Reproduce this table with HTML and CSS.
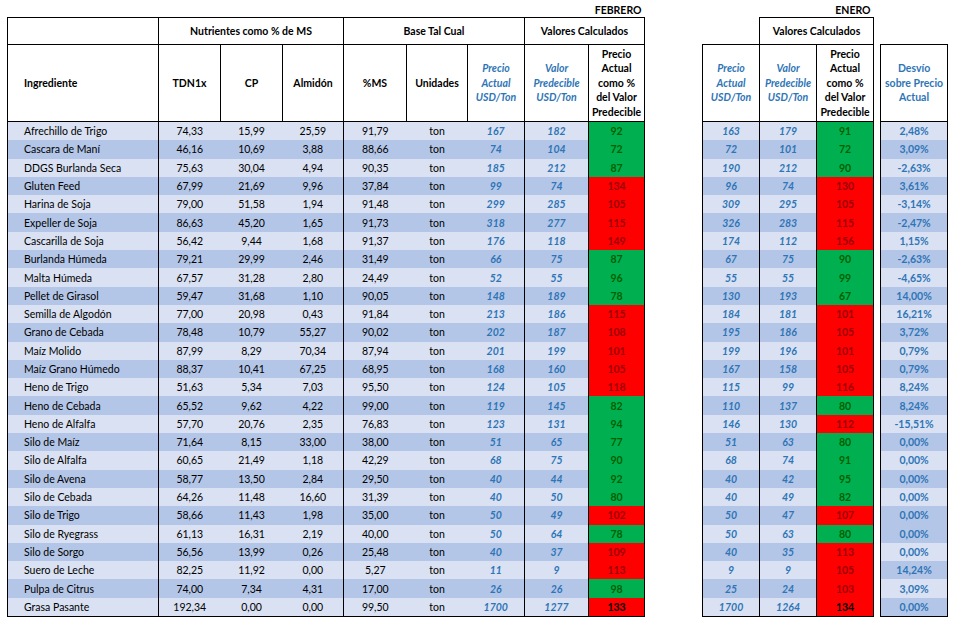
FILE: index.html
```html
<!DOCTYPE html>
<html lang="es">
<head>
<meta charset="utf-8">
<title>Valores predecibles de ingredientes</title>
<link rel="stylesheet" href="styles.css">
</head>
<body>
<div class="sheet">
  <table class="tbl tbl-feb">
    <colgroup>
      <col class="w-ing"><col class="w62"><col class="w62"><col class="w61"><col class="w63"><col class="w61"><col class="w57"><col class="w64"><col class="w56">
    </colgroup>
    <thead>
      <tr class="r-label"><td colspan="9" class="month">FEBRERO</td></tr>
      <tr class="r-h1">
        <th class="hb"></th>
        <th class="hb" colspan="3">Nutrientes como % de MS</th>
        <th class="hb" colspan="3">Base Tal Cual</th>
        <th class="hb" colspan="2">Valores Calculados</th>
      </tr>
      <tr class="r-h2">
        <th class="hb ing">Ingrediente</th>
        <th class="hb">TDN1x</th>
        <th class="hb">CP</th>
        <th class="hb">Almidón</th>
        <th class="hb">%MS</th>
        <th class="hb">Unidades</th>
        <th class="hb blue-i">Precio<br>Actual<br>USD/Ton</th>
        <th class="hb blue-i">Valor<br>Predecible<br>USD/Ton</th>
        <th class="hb">Precio<br>Actual<br>como %<br>del Valor<br>Predecible</th>
      </tr>
    </thead>
    <tbody>
      <tr><td class="ing sl">Afrechillo de Trigo</td><td class="sl">74,33</td><td>15,99</td><td>25,59</td><td class="sl">91,79</td><td>ton</td><td class="bi">167</td><td class="bi sl">182</td><td class="g sl sr">92</td></tr>
      <tr><td class="ing sl">Cascara de Maní</td><td class="sl">46,16</td><td>10,69</td><td>3,88</td><td class="sl">88,66</td><td>ton</td><td class="bi">74</td><td class="bi sl">104</td><td class="g sl sr">72</td></tr>
      <tr><td class="ing sl">DDGS Burlanda Seca</td><td class="sl">75,63</td><td>30,04</td><td>4,94</td><td class="sl">90,35</td><td>ton</td><td class="bi">185</td><td class="bi sl">212</td><td class="g sl sr">87</td></tr>
      <tr><td class="ing sl">Gluten Feed</td><td class="sl">67,99</td><td>21,69</td><td>9,96</td><td class="sl">37,84</td><td>ton</td><td class="bi">99</td><td class="bi sl">74</td><td class="r sl sr">134</td></tr>
      <tr><td class="ing sl">Harina de Soja</td><td class="sl">79,00</td><td>51,58</td><td>1,94</td><td class="sl">91,48</td><td>ton</td><td class="bi">299</td><td class="bi sl">285</td><td class="r sl sr">105</td></tr>
      <tr><td class="ing sl">Expeller de Soja</td><td class="sl">86,63</td><td>45,20</td><td>1,65</td><td class="sl">91,73</td><td>ton</td><td class="bi">318</td><td class="bi sl">277</td><td class="r sl sr">115</td></tr>
      <tr><td class="ing sl">Cascarilla de Soja</td><td class="sl">56,42</td><td>9,44</td><td>1,68</td><td class="sl">91,37</td><td>ton</td><td class="bi">176</td><td class="bi sl">118</td><td class="r sl sr">149</td></tr>
      <tr><td class="ing sl">Burlanda Húmeda</td><td class="sl">79,21</td><td>29,99</td><td>2,46</td><td class="sl">31,49</td><td>ton</td><td class="bi">66</td><td class="bi sl">75</td><td class="g sl sr">87</td></tr>
      <tr><td class="ing sl">Malta Húmeda</td><td class="sl">67,57</td><td>31,28</td><td>2,80</td><td class="sl">24,49</td><td>ton</td><td class="bi">52</td><td class="bi sl">55</td><td class="g sl sr">96</td></tr>
      <tr><td class="ing sl">Pellet de Girasol</td><td class="sl">59,47</td><td>31,68</td><td>1,10</td><td class="sl">90,05</td><td>ton</td><td class="bi">148</td><td class="bi sl">189</td><td class="g sl sr">78</td></tr>
      <tr><td class="ing sl">Semilla de Algodón</td><td class="sl">77,00</td><td>20,98</td><td>0,43</td><td class="sl">91,84</td><td>ton</td><td class="bi">213</td><td class="bi sl">186</td><td class="r sl sr">115</td></tr>
      <tr><td class="ing sl">Grano de Cebada</td><td class="sl">78,48</td><td>10,79</td><td>55,27</td><td class="sl">90,02</td><td>ton</td><td class="bi">202</td><td class="bi sl">187</td><td class="r sl sr">108</td></tr>
      <tr><td class="ing sl">Maíz Molido</td><td class="sl">87,99</td><td>8,29</td><td>70,34</td><td class="sl">87,94</td><td>ton</td><td class="bi">201</td><td class="bi sl">199</td><td class="r sl sr">101</td></tr>
      <tr><td class="ing sl">Maíz Grano Húmedo</td><td class="sl">88,37</td><td>10,41</td><td>67,25</td><td class="sl">68,95</td><td>ton</td><td class="bi">168</td><td class="bi sl">160</td><td class="r sl sr">105</td></tr>
      <tr><td class="ing sl">Heno de Trigo</td><td class="sl">51,63</td><td>5,34</td><td>7,03</td><td class="sl">95,50</td><td>ton</td><td class="bi">124</td><td class="bi sl">105</td><td class="r sl sr">118</td></tr>
      <tr><td class="ing sl">Heno de Cebada</td><td class="sl">65,52</td><td>9,62</td><td>4,22</td><td class="sl">99,00</td><td>ton</td><td class="bi">119</td><td class="bi sl">145</td><td class="g sl sr">82</td></tr>
      <tr><td class="ing sl">Heno de Alfalfa</td><td class="sl">57,70</td><td>20,76</td><td>2,35</td><td class="sl">76,83</td><td>ton</td><td class="bi">123</td><td class="bi sl">131</td><td class="g sl sr">94</td></tr>
      <tr><td class="ing sl">Silo de Maíz</td><td class="sl">71,64</td><td>8,15</td><td>33,00</td><td class="sl">38,00</td><td>ton</td><td class="bi">51</td><td class="bi sl">65</td><td class="g sl sr">77</td></tr>
      <tr><td class="ing sl">Silo de Alfalfa</td><td class="sl">60,65</td><td>21,49</td><td>1,18</td><td class="sl">42,29</td><td>ton</td><td class="bi">68</td><td class="bi sl">75</td><td class="g sl sr">90</td></tr>
      <tr><td class="ing sl">Silo de Avena</td><td class="sl">58,77</td><td>13,50</td><td>2,84</td><td class="sl">29,50</td><td>ton</td><td class="bi">40</td><td class="bi sl">44</td><td class="g sl sr">92</td></tr>
      <tr><td class="ing sl">Silo de Cebada</td><td class="sl">64,26</td><td>11,48</td><td>16,60</td><td class="sl">31,39</td><td>ton</td><td class="bi">40</td><td class="bi sl">50</td><td class="g sl sr">80</td></tr>
      <tr><td class="ing sl">Silo de Trigo</td><td class="sl">58,66</td><td>11,43</td><td>1,98</td><td class="sl">35,00</td><td>ton</td><td class="bi">50</td><td class="bi sl">49</td><td class="r sl sr">102</td></tr>
      <tr><td class="ing sl">Silo de Ryegrass</td><td class="sl">61,13</td><td>16,31</td><td>2,19</td><td class="sl">40,00</td><td>ton</td><td class="bi">50</td><td class="bi sl">64</td><td class="g sl sr">78</td></tr>
      <tr><td class="ing sl">Silo de Sorgo</td><td class="sl">56,56</td><td>13,99</td><td>0,26</td><td class="sl">25,48</td><td>ton</td><td class="bi">40</td><td class="bi sl">37</td><td class="r sl sr">109</td></tr>
      <tr><td class="ing sl">Suero de Leche</td><td class="sl">82,25</td><td>11,92</td><td>0,00</td><td class="sl">5,27</td><td>ton</td><td class="bi">11</td><td class="bi sl">9</td><td class="r sl sr">113</td></tr>
      <tr><td class="ing sl">Pulpa de Citrus</td><td class="sl">74,00</td><td>7,34</td><td>4,31</td><td class="sl">17,00</td><td>ton</td><td class="bi">26</td><td class="bi sl">26</td><td class="g sl sr">98</td></tr>
      <tr class="last"><td class="ing sl">Grasa Pasante</td><td class="sl">192,34</td><td>0,00</td><td>0,00</td><td class="sl">99,50</td><td>ton</td><td class="bi">1700</td><td class="bi sl">1277</td><td class="r k sl sr">133</td></tr>
    </tbody>
  </table>

  <table class="tbl tbl-ene">
    <colgroup>
      <col class="w57"><col class="w57"><col class="w57"><col class="w7"><col class="w67">
    </colgroup>
    <thead>
      <tr class="r-label"><td colspan="3" class="month">ENERO</td><td colspan="2"></td></tr>
      <tr class="r-h1">
        <th></th>
        <th class="hb" colspan="2">Valores Calculados</th>
        <th></th>
        <th></th>
      </tr>
      <tr class="r-h2">
        <th class="hb blue-i">Precio<br>Actual<br>USD/Ton</th>
        <th class="hb blue-i">Valor<br>Predecible<br>USD/Ton</th>
        <th class="hb">Precio<br>Actual<br>como %<br>del Valor<br>Predecible</th>
        <th class="gap"></th>
        <th class="hb blue">Desvío<br>sobre Precio<br>Actual</th>
      </tr>
    </thead>
    <tbody>
      <tr><td class="bi sl">163</td><td class="bi sl">179</td><td class="g sl sr">91</td><td class="gap"></td><td class="dv sl sr">2,48%</td></tr>
      <tr><td class="bi sl">72</td><td class="bi sl">101</td><td class="g sl sr">72</td><td class="gap"></td><td class="dv sl sr">3,09%</td></tr>
      <tr><td class="bi sl">190</td><td class="bi sl">212</td><td class="g sl sr">90</td><td class="gap"></td><td class="dv sl sr">-2,63%</td></tr>
      <tr><td class="bi sl">96</td><td class="bi sl">74</td><td class="r sl sr">130</td><td class="gap"></td><td class="dv sl sr">3,61%</td></tr>
      <tr><td class="bi sl">309</td><td class="bi sl">295</td><td class="r sl sr">105</td><td class="gap"></td><td class="dv sl sr">-3,14%</td></tr>
      <tr><td class="bi sl">326</td><td class="bi sl">283</td><td class="r sl sr">115</td><td class="gap"></td><td class="dv sl sr">-2,47%</td></tr>
      <tr><td class="bi sl">174</td><td class="bi sl">112</td><td class="r sl sr">156</td><td class="gap"></td><td class="dv sl sr">1,15%</td></tr>
      <tr><td class="bi sl">67</td><td class="bi sl">75</td><td class="g sl sr">90</td><td class="gap"></td><td class="dv sl sr">-2,63%</td></tr>
      <tr><td class="bi sl">55</td><td class="bi sl">55</td><td class="g sl sr">99</td><td class="gap"></td><td class="dv sl sr">-4,65%</td></tr>
      <tr><td class="bi sl">130</td><td class="bi sl">193</td><td class="g sl sr">67</td><td class="gap"></td><td class="dv sl sr">14,00%</td></tr>
      <tr><td class="bi sl">184</td><td class="bi sl">181</td><td class="r sl sr">101</td><td class="gap"></td><td class="dv sl sr">16,21%</td></tr>
      <tr><td class="bi sl">195</td><td class="bi sl">186</td><td class="r sl sr">105</td><td class="gap"></td><td class="dv sl sr">3,72%</td></tr>
      <tr><td class="bi sl">199</td><td class="bi sl">196</td><td class="r sl sr">101</td><td class="gap"></td><td class="dv sl sr">0,79%</td></tr>
      <tr><td class="bi sl">167</td><td class="bi sl">158</td><td class="r sl sr">105</td><td class="gap"></td><td class="dv sl sr">0,79%</td></tr>
      <tr><td class="bi sl">115</td><td class="bi sl">99</td><td class="r sl sr">116</td><td class="gap"></td><td class="dv sl sr">8,24%</td></tr>
      <tr><td class="bi sl">110</td><td class="bi sl">137</td><td class="g sl sr">80</td><td class="gap"></td><td class="dv sl sr">8,24%</td></tr>
      <tr><td class="bi sl">146</td><td class="bi sl">130</td><td class="r sl sr">112</td><td class="gap"></td><td class="dv sl sr">-15,51%</td></tr>
      <tr><td class="bi sl">51</td><td class="bi sl">63</td><td class="g sl sr">80</td><td class="gap"></td><td class="dv sl sr">0,00%</td></tr>
      <tr><td class="bi sl">68</td><td class="bi sl">74</td><td class="g sl sr">91</td><td class="gap"></td><td class="dv sl sr">0,00%</td></tr>
      <tr><td class="bi sl">40</td><td class="bi sl">42</td><td class="g sl sr">95</td><td class="gap"></td><td class="dv sl sr">0,00%</td></tr>
      <tr><td class="bi sl">40</td><td class="bi sl">49</td><td class="g sl sr">82</td><td class="gap"></td><td class="dv sl sr">0,00%</td></tr>
      <tr><td class="bi sl">50</td><td class="bi sl">47</td><td class="r sl sr">107</td><td class="gap"></td><td class="dv sl sr">0,00%</td></tr>
      <tr><td class="bi sl">50</td><td class="bi sl">63</td><td class="g sl sr">80</td><td class="gap"></td><td class="dv dark sl sr">0,00%</td></tr>
      <tr><td class="bi sl">40</td><td class="bi sl">35</td><td class="r sl sr">113</td><td class="gap"></td><td class="dv light sl sr">0,00%</td></tr>
      <tr><td class="bi sl">9</td><td class="bi sl">9</td><td class="r sl sr">105</td><td class="gap"></td><td class="dv dark sl sr">14,24%</td></tr>
      <tr><td class="bi sl">25</td><td class="bi sl">24</td><td class="r sl sr">103</td><td class="gap"></td><td class="dv light sl sr">3,09%</td></tr>
      <tr class="last"><td class="bi sl">1700</td><td class="bi sl">1264</td><td class="r k sl sr">134</td><td class="gap"></td><td class="dv dark sl sr">0,00%</td></tr>
    </tbody>
  </table>
</div>
</body>
</html>
```

FILE: styles.css
```css
html, body {
  margin: 0;
  padding: 0;
  background: #ffffff;
}

body {
  font-family: Lato, "Open Sans", "Liberation Sans", sans-serif;
  font-size: 10.5px;
  color: #000000;
}

.sheet {
  display: flex;
  align-items: flex-start;
  gap: 57px;
  padding-left: 7px;
}

.tbl {
  border-collapse: collapse;
  table-layout: fixed;
}

.tbl-feb { width: 637px; }
.tbl-ene { width: 245px; }

.w-ing { width: 151px; }
.w62 { width: 62px; }
.w61 { width: 61px; }
.w63 { width: 63px; }
.w64 { width: 64px; }
.w57 { width: 57px; }
.w56 { width: 56px; }
.w67 { width: 67px; }
.w7 { width: 7px; }

.tbl th,
.tbl td {
  padding: 0;
  text-align: center;
  vertical-align: middle;
  white-space: nowrap;
  overflow: hidden;
}

.tbl th {
  font-weight: 700;
  line-height: 14.5px;
}

.r-label td { height: 17px; }
.r-h1 th { height: 26px; }
.r-h2 th { height: 76px; }

.month {
  text-align: right !important;
  font-weight: 700;
  padding-right: 3px !important;
  vertical-align: bottom !important;
  line-height: 14px;
  padding-bottom: 0 !important;
}

.hb { border: 1px solid #000000; }

.tbl th.ing,
.tbl td.ing {
  text-align: left;
  padding-left: 16px;
}

.blue-i {
  color: #2e75b6;
  font-style: italic;
}

.blue { color: #2e75b6; }

.tbl tbody tr td {
  height: 18.3px;
  line-height: 14px;
  background: #d9e1f2;
}

.tbl tbody tr:nth-child(even) td { background: #b4c6e7; }

.tbl tbody tr td.light { background: #d9e1f2; }
.tbl tbody tr td.dark { background: #b4c6e7; }

.sl { border-left: 1px solid #000000; }
.sr { border-right: 1px solid #000000; }
.tbl tbody tr.last td { border-bottom: 1px solid #000000; }

.tbl tbody tr td.gap,
.tbl thead tr th.gap {
  background: #ffffff;
  border-left: 1px solid #000000;
  border-top: none;
  border-bottom: none;
}
.tbl tbody tr.last td.gap { border-bottom: none; }

.bi {
  color: #2e75b6;
  font-style: italic;
  font-weight: 700;
}

.dv {
  color: #2e75b6;
  font-weight: 700;
}

.tbl tbody tr td.g {
  background: #00b050;
  color: #006100;
  font-weight: 700;
}

.tbl tbody tr td.r {
  background: #ff0000;
  color: #9c0006;
  font-weight: 700;
}

.tbl tbody tr td.r.k { color: #000000; }
```
